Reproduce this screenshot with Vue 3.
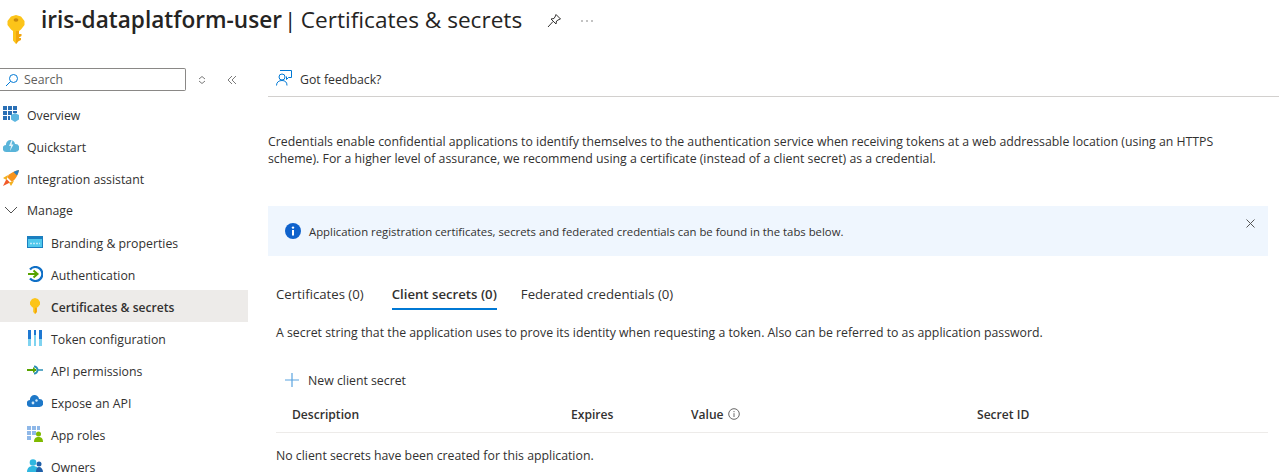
<template>
  <div class="page">
    <header class="title-bar">
      <svg class="title-key" width="18" height="29" viewBox="0 0 18 29">
        <path d="M9 0 L14 1.500 L17.500 6 L17.500 10 L14 14.500 L12 16 V25.500 L9 29 L6 25.500 V16 L4 14.500 L.5 10 L.5 6 L4 1.500 Z" fill="#fcc419" />
        <path d="M9 16 H12 V25.500 L9 29 Z" fill="#f2a60c" />
        <path d="M12 19 H14.500 V21 L12 22.500 Z M12 23 H14 V25 L12 26 Z" fill="#f2a60c" />
        <ellipse cx="9" cy="5" rx="2.400" ry="1.700" fill="#c98a0c" />
      </svg>
      <h1 class="title"><b>iris-dataplatform-user</b><span class="pipe">|</span>Certificates &amp; secrets</h1>
      <svg class="pin" width="16" height="16" viewBox="0 0 16 16" fill="none" stroke="#323130" stroke-width="1">
        <path d="M10 1.500 L14.500 6 L13 6.500 L10.500 8 L10 11 L5 6 L8 5.500 L9.500 3 Z M7 8.500 L2 14" />
      </svg>
      <svg class="more" width="12" height="4" viewBox="0 0 12 4" fill="#777">
        <circle cx="1" cy="2" r=".8" />
        <circle cx="6" cy="2" r=".8" />
        <circle cx="11" cy="2" r=".8" />
      </svg>
    </header>

    <div class="layout">
      <aside class="sidebar">
        <div class="search-row">
          <div class="search">
            <svg width="14" height="14" viewBox="0 0 14 14" fill="none" stroke="#0078d4" stroke-width="1">
              <circle cx="8.500" cy="5.500" r="4" />
              <path d="M5.500 8.500 L1 13" />
            </svg>
            <span>Search</span>
          </div>
          <svg class="sort" width="10" height="10" viewBox="0 0 10 10" fill="none" stroke="#7a7a7a" stroke-width="1">
            <path d="M2 4 L5 1.500 L8 4 M2 6 L5 8.500 L8 6" />
          </svg>
          <svg class="collapse" width="10" height="10" viewBox="0 0 10 10" fill="none" stroke="#7a7a7a" stroke-width="1">
            <path d="M5 1 L1 5 L5 9 M9 1 L5 5 L9 9" />
          </svg>
        </div>

        <nav class="nav">
          <a v-for="item in navItems" :key="item.label" class="nav-item" :class="{ sub: item.sub, active: item.active, group: item.group }">
            <svg class="nav-icon" width="16" height="16" viewBox="0 0 16 16" v-html="item.icon"></svg>
            <span class="nav-label">{{ item.label }}</span>
          </a>
        </nav>
      </aside>

      <main class="main">
        <div class="command-bar">
          <svg width="16" height="16" viewBox="0 0 16 16" fill="none" stroke="#0078d4" stroke-width="1">
            <path d="M4 .5 H15.500 V7.500 H12.500 L10.500 9.500 V6.500" />
            <circle cx="6" cy="7" r="3" fill="#fff" />
            <path d="M.5 15.500 C.5 12 3 10.500 6 10.500 C9 10.500 11 12 11 15.500" />
          </svg>
          <span class="command-label">Got feedback?</span>
        </div>

        <p class="intro">Credentials enable confidential applications to identify themselves to the authentication service when receiving tokens at a web addressable location (using an HTTPS scheme). For a higher level of assurance, we recommend using a certificate (instead of a client secret) as a credential.</p>

        <div class="banner">
          <svg width="16" height="16" viewBox="0 0 16 16">
            <circle cx="8" cy="8" r="8" fill="#0f62cc" />
            <rect x="7" y="7" width="2" height="5.500" fill="#fff" />
            <circle cx="8" cy="4.600" r="1.200" fill="#fff" />
          </svg>
          <span class="banner-text">Application registration certificates, secrets and federated credentials can be found in the tabs below.</span>
          <svg class="banner-close" width="9" height="9" viewBox="0 0 9 9" stroke="#555" stroke-width="1">
            <path d="M.5 .5 L8.500 8.500 M8.500 .5 L.5 8.500" />
          </svg>
        </div>

        <div class="section">
          <div class="tabs">
            <span v-for="tab in tabs" :key="tab.label" class="tab" :class="{ selected: tab.selected }">{{ tab.label }}</span>
          </div>
          <p class="tab-desc">A secret string that the application uses to prove its identity when requesting a token. Also can be referred to as application password.</p>

          <div class="new-secret">
            <svg width="16" height="16" viewBox="0 0 16 16" stroke="#5ba4e0" stroke-width="1.200">
              <path d="M8 1 V15 M1 8 H15" />
            </svg>
            <span>New client secret</span>
          </div>

          <div class="table-head">
            <span class="col-desc">Description</span>
            <span class="col-exp">Expires</span>
            <span class="col-val">Value
              <svg width="12" height="12" viewBox="0 0 12 12" fill="none" stroke="#666" stroke-width="1">
                <circle cx="6" cy="6" r="5.300" />
                <path d="M6 5.200 V9 M6 3 V4.200" />
              </svg>
            </span>
            <span class="col-id">Secret ID</span>
          </div>
          <div class="table-empty">No client secrets have been created for this application.</div>
        </div>
      </main>
    </div>
  </div>
</template>

<script setup>
const navItems = [
  {
    label: 'Overview',
    icon: '<path d="M0 0h4v4H0zM5 0h4v4H5zM10 0h4v4h-4zM0 5h4v4H0zM5 5h4v4H5zM10 5h4v2h-4zM0 10h4v4H0zM5 10h2v4H5z" fill="#2a6fb5"/><path d="M12 7l4 2v4.500L12 16l-4-2.500V9z" fill="#5cb6e0"/>',
  },
  {
    label: 'Quickstart',
    icon: '<path d="M3.500 14a3.500 3.500 0 0 1-.5-7 4.500 4.500 0 0 1 9-1A4 4 0 0 1 12.500 14z" fill="#59b4d9"/><path d="M8.500 2L6 8h2l-1 5 3.500-6.500H8.500l1-4z" fill="#e4f3fa"/>',
  },
  {
    label: 'Integration assistant',
    icon: '<path d="M4 7C7 3 11 1 16 0c-1 5-3 9-7 12z" fill="#f7941d"/><path d="M10.500 2l3.500 3.500C15 4 15.500 2 16 0c-2 .5-3.800 1-5.500 2z" fill="#2a7fc1"/><path d="M0 16l3.500-7 3.500 3.500z" fill="#f15a29"/><path d="M0 8l5-3-1.500 5zM8 16l3-5-5 1.500z" fill="#f2b01e"/>',
  },
  {
    label: 'Manage',
    group: true,
    icon: '<path d="M2 5l6 6 6-6" fill="none" stroke="#505050" stroke-width="1"/>',
  },
  {
    label: 'Branding & properties',
    sub: true,
    icon: '<rect x="0" y="2" width="16" height="12" fill="#1b7fc0"/><rect x="1" y="5" width="14" height="8" fill="#50c8ec"/><path d="M3 9.500h10" stroke="#bdeafa" stroke-width="1.500" stroke-dasharray="2 1"/>',
  },
  {
    label: 'Authentication',
    sub: true,
    icon: '<path d="M3 3.500A7 7 0 1 1 3 12.500" fill="none" stroke="#0f6fc6" stroke-width="2.200"/><path d="M1 8h8" stroke="#57a300" stroke-width="2"/><path d="M6.500 4.500L10.500 8l-4 3.500" fill="none" stroke="#57a300" stroke-width="2"/>',
  },
  {
    label: 'Certificates & secrets',
    sub: true,
    active: true,
    icon: '<path d="M8 0l3 1 2 3v2.500L11 9 9.800 9.800V14L8 16l-1.800-2V9.800L5 9 3 6.500V4l2-3z" fill="#fcc419"/><path d="M8 9.800h1.800V14L8 16z" fill="#f2a60c"/>',
  },
  {
    label: 'Token configuration',
    sub: true,
    icon: '<path d="M1 0h3v16H1zM7 0h2v16H7zM12 0h3v16h-3z" fill="#1e78d2"/><path d="M1 9h3v7H1zM7 5h2v11H7zM12 9h3v7h-3z" fill="#7fd3f0"/>',
  },
  {
    label: 'API permissions',
    sub: true,
    icon: '<path d="M0 8h9" stroke="#57a300" stroke-width="2"/><path d="M7 4.500A3.500 3.500 0 1 1 7 11.500" fill="none" stroke="#2a8fb5" stroke-width="2"/><path d="M11 8h5" stroke="#2a8fb5" stroke-width="1.500"/><path d="M6 5L9.500 8 6 11z" fill="#57a300"/>',
  },
  {
    label: 'Expose an API',
    sub: true,
    icon: '<path d="M3.500 13a3.500 3.500 0 0 1-.5-7 4.500 4.500 0 0 1 9-1A4 4 0 0 1 12.500 13z" fill="#1e78c8"/><circle cx="6" cy="9" r="1.400" fill="#cfe8f8"/><circle cx="9.500" cy="6.500" r="1.200" fill="#cfe8f8"/>',
  },
  {
    label: 'App roles',
    sub: true,
    icon: '<path d="M0 0h4v4H0zM5 0h4v4H5zM10 0h3v4h-3zM0 5h4v4H0zM5 5h4v4H5zM0 10h4v4H0z" fill="#8fb8e8"/><circle cx="11.500" cy="8" r="2.500" fill="#7fba00"/><path d="M7 16c0-4 2-5 4.500-5S16 12 16 16z" fill="#7fba00"/>',
  },
  {
    label: 'Owners',
    sub: true,
    icon: '<circle cx="6" cy="4.500" r="3.300" fill="#2fb7e0"/><path d="M0 14c0-4 2.500-6 6-6s6 2 6 6z" fill="#2fb7e0"/><circle cx="12" cy="6" r="2.500" fill="#1f5fa8"/><path d="M9 14c0-3 1-5 3-5s4 2 4 5z" fill="#1f5fa8"/>',
  },
];

const tabs = [
  { label: 'Certificates (0)' },
  { label: 'Client secrets (0)', selected: true },
  { label: 'Federated credentials (0)' },
];
</script>

<style>
html, body {
  margin: 0;
  background: #fff;
}
</style>

<style scoped>
.page {
  width: 1279px;
  height: 473px;
  overflow: hidden;
  font-family: "Open Sans", "Liberation Sans", sans-serif;
  font-size: 12.300px;
  color: #323130;
  background: #fff;
}

.title-bar {
  display: flex;
  align-items: center;
  height: 60px;
  padding-left: 7px;
}

.title-key {
  margin-right: 16px;
  margin-bottom: 2px;
}

.title {
  margin: 0 0 21px 0;
  font-size: 22.600px;
  font-weight: 400;
  line-height: 40px;
  color: #252423;
  white-space: nowrap;
}

.title b {
  font-weight: 600;
}

.pipe {
  margin: 0 4.500px 0 2px;
}

.pin {
  margin: 0 0 18px 24px;
}

.more {
  margin: 0 0 18px 19px;
}

.layout {
  display: flex;
}

.sidebar {
  width: 248px;
  flex-shrink: 0;
}

.search-row {
  display: flex;
  align-items: center;
  height: 23px;
  margin-top: 8px;
}

.search {
  display: flex;
  align-items: center;
  gap: 5px;
  box-sizing: border-box;
  width: 186px;
  height: 23px;
  padding-left: 5px;
  border: 1px solid #8a8886;
  border-left: none;
  border-radius: 0 2px 2px 0;
  color: #605e5c;
}

.sort {
  margin-left: 11px;
}

.collapse {
  margin-left: 20px;
}

.nav {
  margin-top: 7px;
}

.nav-item {
  display: flex;
  align-items: center;
  gap: 8px;
  height: 32px;
  padding-left: 3px;
}

.nav-item.sub {
  padding-left: 27px;
}

.nav-item.active {
  background: #edebe9;
  font-size: 12.100px;
  font-weight: 600;
}

.nav-icon {
  flex-shrink: 0;
}

.nav-label {
  padding-top: 2px;
}

.nav-item.group .nav-label {
  padding-top: 0;
}

.main {
  flex: 1;
  min-width: 0;
  padding: 0 11px 0 20px;
}

.command-bar {
  display: flex;
  align-items: center;
  gap: 8px;
  height: 36px;
  margin-right: -11px;
  padding-left: 8px;
  border-bottom: 1px solid #d2d0ce;
}

.command-label {
  padding-top: 2px;
}

.intro {
  max-width: 960px;
  margin: 36px 0 0;
  line-height: 17px;
}

.banner {
  display: flex;
  align-items: center;
  gap: 8px;
  height: 50px;
  margin-top: 39px;
  padding: 0 13px 0 17px;
  background: #eff6fe;
  font-size: 11.330px;
}

.banner-text {
  flex: 1;
}

.banner-close {
  align-self: flex-start;
  margin-top: 13px;
}

.section {
  padding-left: 8px;
}

.tabs {
  display: flex;
  margin-top: 25px;
  font-size: 13.200px;
}

.tab {
  padding: 3px 0 4px;
  margin-right: 28px;
  line-height: 20px;
  border-bottom: 2px solid transparent;
}

.tab.selected {
  margin-right: 24px;
  font-weight: 600;
  border-bottom-color: #0078d4;
}

.tab-desc {
  margin: 14px 0 0;
  line-height: 17px;
}

.new-secret {
  display: flex;
  align-items: center;
  gap: 8px;
  height: 24px;
  margin-top: 27px;
  padding-left: 8px;
}

.table-head {
  display: flex;
  align-items: center;
  height: 36px;
  margin-top: 4px;
  border-bottom: 1px solid #edebe9;
  font-size: 12.100px;
  font-weight: 600;
}

.col-desc {
  width: 279px;
  padding-left: 16px;
}

.col-exp {
  width: 120px;
}

.col-val {
  display: flex;
  align-items: center;
  gap: 4px;
  width: 286px;
}

.table-empty {
  margin-top: 14px;
  line-height: 17px;
}
</style>
